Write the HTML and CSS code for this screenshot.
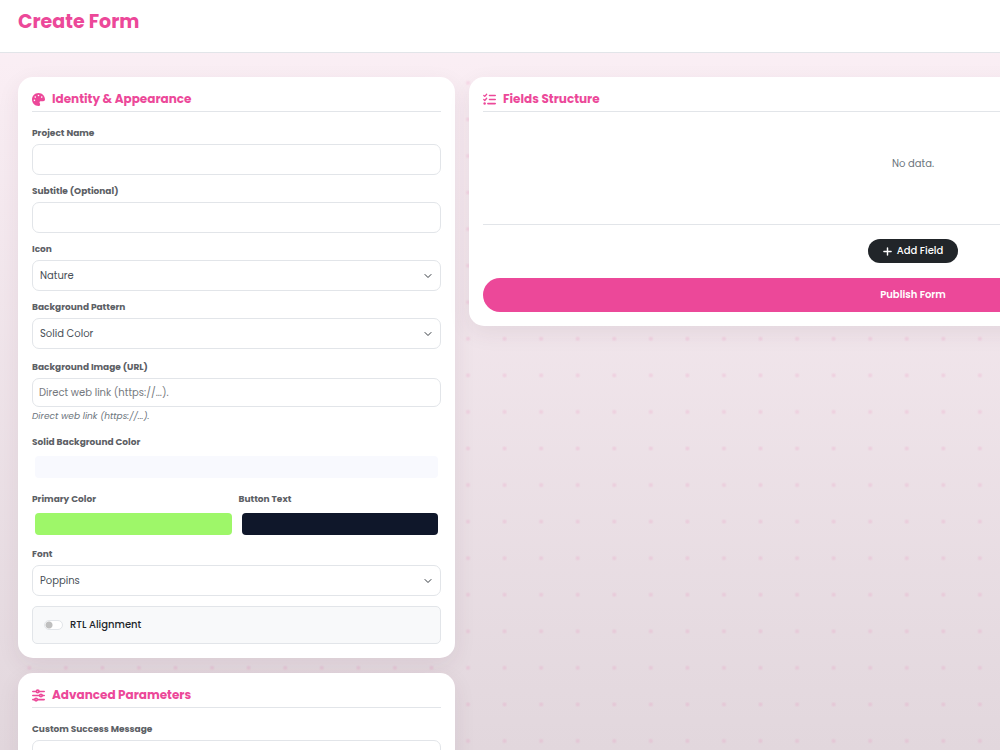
FILE: index.html
```html
<!DOCTYPE html>
<html lang="en">
<head>
  <meta charset="UTF-8">
  <meta name="viewport" content="width=device-width, initial-scale=1">
  <title>Create Form</title>
  <link rel="stylesheet" href="styles.css">
</head>
<body>
  <header class="topbar">
    <h1>Create Form</h1>
  </header>

  <main class="layout">
    <div class="column">
      <section class="card">
        <h2 class="card-title">
          <svg class="icon" viewBox="0 0 512 512" aria-hidden="true"><path fill="currentColor" d="M512 256c0 .9 0 1.8 0 2.7c-.4 36.5-33.6 61.3-70.1 61.3H344c-26.5 0-48 21.5-48 48c0 3.4 .4 6.7 1 9.9c2.1 10.2 6.5 20 10.8 29.9c6.1 13.8 12.1 27.5 12.1 42c0 31.8-21.6 60.7-53.4 62c-3.5 .1-7 .2-10.6 .2C114.6 512 0 397.4 0 256S114.6 0 256 0S512 114.6 512 256zM128 288a32 32 0 1 0 -64 0 32 32 0 1 0 64 0zm0-96a32 32 0 1 0 0-64 32 32 0 1 0 0 64zM288 96a32 32 0 1 0 -64 0 32 32 0 1 0 64 0zm96 96a32 32 0 1 0 0-64 32 32 0 1 0 0 64z"/></svg>
          Identity &amp; Appearance
        </h2>

        <div class="field">
          <label for="name">Project Name</label>
          <input class="control" type="text" id="name">
        </div>
        <div class="field">
          <label for="subtitle">Subtitle (Optional)</label>
          <input class="control" type="text" id="subtitle">
        </div>
        <div class="field">
          <label for="icon">Icon</label>
          <select class="control" id="icon">
            <option>Nature</option>
          </select>
        </div>
        <div class="field field-wide">
          <label for="pattern">Background Pattern</label>
          <select class="control" id="pattern">
            <option>Solid Color</option>
          </select>
        </div>
        <div class="field field-wide">
          <label for="bgImage">Background Image (URL)</label>
          <input class="control control-sm" type="url" id="bgImage" placeholder="Direct web link (https://...).">
          <small class="help">Direct web link (https://...).</small>
        </div>
        <div class="field field-wide">
          <label for="bgColor">Solid Background Color</label>
          <input class="color" type="color" id="bgColor" value="#f8f9fe">
        </div>
        <div class="row">
          <div class="field">
            <label for="primary">Primary Color</label>
            <input class="color" type="color" id="primary" value="#9ef769">
          </div>
          <div class="field">
            <label for="btnText">Button Text</label>
            <input class="color" type="color" id="btnText" value="#0f172a">
          </div>
        </div>
        <div class="field">
          <label for="font">Font</label>
          <select class="control" id="font">
            <option>Poppins</option>
          </select>
        </div>
        <div class="switch">
          <input type="checkbox" role="switch" id="rtl">
          <label for="rtl">RTL Alignment</label>
        </div>
      </section>

      <section class="card">
        <h2 class="card-title">
          <svg class="icon" viewBox="0 0 16 16" fill="none" stroke="currentColor" stroke-width="2" stroke-linecap="round" aria-hidden="true"><path d="M1 3h4M9 3h6M1 8h8M13 8h2M1 13h2M7 13h8"/><circle cx="7" cy="3" r="1.6"/><circle cx="11" cy="8" r="1.6"/><circle cx="5" cy="13" r="1.6"/></svg>
          Advanced Parameters
        </h2>
        <div class="field">
          <label for="success">Custom Success Message</label>
          <input class="control" type="text" id="success">
        </div>
      </section>
    </div>

    <section class="card">
      <h2 class="card-title">
        <svg class="icon" viewBox="0 0 16 16" fill="none" stroke="currentColor" stroke-width="2" stroke-linecap="round" aria-hidden="true"><path d="M8 3h7M8 8h7M6 13h9"/><path stroke-width="1.6" stroke-linejoin="round" d="M1 3l1.2 1.2L4.500 1.500M1 8l1.2 1.2L4.500 6.500"/><circle cx="2" cy="13" r="1.500" fill="currentColor" stroke="none"/></svg>
        Fields Structure
      </h2>
      <p class="empty">No data.</p>
      <div class="actions">
        <button class="btn btn-dark" type="button">
          <svg viewBox="0 0 10 10" fill="none" stroke="currentColor" stroke-width="1.6" stroke-linecap="round" aria-hidden="true"><path d="M5 1v8M1 5h8"/></svg>
          Add Field
        </button>
        <button class="btn btn-primary" type="submit">Publish Form</button>
      </div>
    </section>
  </main>
</body>
</html>
```

FILE: styles.css
```css
:root {
  --pink: #ec4899;
  --line: #e2e5e9;
  --dot-gap: calc(256px / 7);
}

* {
  box-sizing: border-box;
}

body {
  margin: 0;
  min-height: 100vh;
  font-family: 'Poppins', 'Inter', sans-serif;
  font-size: 10px;
  line-height: 14px;
  color: #212529;
  overflow-x: hidden;
  background:
    radial-gradient(circle, rgba(236, 72, 153, 0.11) 1px, transparent 3px) 11px 28px / var(--dot-gap) var(--dot-gap),
    linear-gradient(#fcf0f6, #e2d7dd 750px);
}

.topbar {
  padding: 7px 18px 15px;
  background: #fff;
  border-bottom: 1px solid var(--line);
}

h1 {
  margin: 0;
  font-size: 19px;
  line-height: 30px;
  font-weight: 700;
  color: var(--pink);
}

.layout {
  display: grid;
  grid-template-columns: minmax(437px, 1fr) minmax(888px, 2fr);
  align-items: start;
  gap: 14px;
  padding: 24px 18px;
}

.column {
  display: grid;
  gap: 15px;
}

.card {
  padding: 14px;
  background: #fff;
  border-radius: 15px;
  box-shadow: 0 7px 22px rgba(80, 40, 60, 0.08);
}

.card-title {
  display: flex;
  align-items: center;
  gap: 7px;
  margin: 0 0 14px;
  padding-bottom: 4px;
  border-bottom: 1px solid var(--line);
  font-size: 12px;
  line-height: 16px;
  font-weight: 700;
  color: var(--pink);
}

.icon {
  width: 13px;
  height: 13px;
}

.field {
  margin-bottom: 9px;
}

.field-wide {
  margin-bottom: 11px;
}

.field label {
  display: block;
  margin-bottom: 4px;
  font-size: 9px;
  font-weight: 700;
  color: #5c6065;
}

.control {
  display: block;
  width: 100%;
  height: 31px;
  padding: 0 7px;
  border: 1px solid var(--line);
  border-radius: 7px;
  background: #fff;
  font: inherit;
  color: #495057;
}

select.control {
  appearance: none;
  background: #fff url("data:image/svg+xml,%3Csvg xmlns='http://www.w3.org/2000/svg' viewBox='0 0 16 16'%3E%3Cpath fill='none' stroke='%23343a40' stroke-linecap='round' stroke-linejoin='round' stroke-width='2' d='m2 5 6 6 6-6'/%3E%3C/svg%3E") no-repeat right 8px center / 8px;
}

.control-sm {
  height: 29px;
  padding: 0 6px;
}

.control::placeholder {
  color: #75797e;
}

.help {
  display: block;
  margin: 2px 0 12px;
  font-size: 9px;
  font-style: italic;
  color: #6c757d;
}

.row {
  display: grid;
  grid-template-columns: 1fr 1fr;
  gap: 4px;
}

.color {
  display: block;
  width: 100%;
  height: 28px;
  padding: 3px;
  border: 0;
  background: none;
}

.color::-webkit-color-swatch-wrapper {
  padding: 0;
}

.color::-webkit-color-swatch {
  border: 0;
  border-radius: 4px;
}

.switch {
  display: flex;
  align-items: center;
  gap: 7px;
  height: 38px;
  margin-top: 10px;
  padding: 0 11px;
  border: 1px solid var(--line);
  border-radius: 5px;
  background: #f8f9fa;
  font-weight: 500;
}

.switch input {
  appearance: none;
  width: 19px;
  height: 10px;
  margin: 0;
  border: 1px solid var(--line);
  border-radius: 5px;
  background: #fff radial-gradient(circle, #bfbfbf 3px, transparent 4px) no-repeat left center / 8px 8px;
}

.empty {
  margin: 0;
  padding: 31px 0 53px;
  text-align: center;
  color: #6c757d;
}

.actions {
  display: grid;
  justify-items: center;
  gap: 15px;
  padding-top: 14px;
  border-top: 1px solid var(--line);
}

.btn {
  display: flex;
  align-items: center;
  justify-content: center;
  gap: 5px;
  padding: 5px 15px;
  border: 0;
  border-radius: 25px;
  font: inherit;
  font-weight: 500;
  color: #fff;
}

.btn svg {
  width: 9px;
  height: 9px;
}

.btn-dark {
  background: #212529;
}

.btn-primary {
  width: 100%;
  padding: 10px;
  font-weight: 600;
  background: var(--pink);
}
```
